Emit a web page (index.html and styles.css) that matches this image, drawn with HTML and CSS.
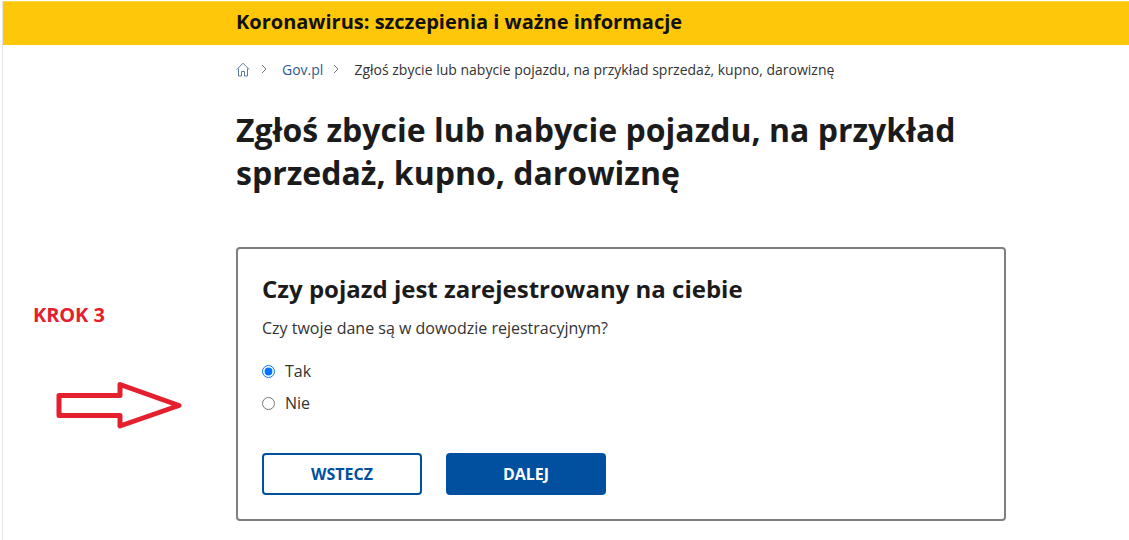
FILE: index.html
```html
<!DOCTYPE html>
<html lang="pl">
<head>
  <meta charset="UTF-8">
  <meta name="viewport" content="width=device-width, initial-scale=1">
  <title>Zgłoś zbycie lub nabycie pojazdu</title>
  <link rel="stylesheet" href="styles.css">
</head>
<body>
  <div class="page">
    <div class="alert-bar">
      <div class="alert-text">Koronawirus: szczepienia i ważne informacje</div>
    </div>

    <div class="layout">
      <aside class="side">
        <div class="step">KROK 3</div>
        <svg class="arrow" width="130" height="52" viewBox="0 0 130 52">
          <path d="M4 15.500H65V4.500L124 25.500L65 46V35.500H4Z" fill="none" stroke="#e5202e" stroke-width="5" stroke-linejoin="round"/>
        </svg>
      </aside>

      <main class="content">
        <nav class="crumbs">
          <svg class="home" width="14" height="15" viewBox="0 0 14 15">
            <path d="M0.800 7.500L7 1.200L13.200 7.500M2.500 6.500V14H5.500V9.500H8.500V14H11.500V6.500" fill="none" stroke="#5b7a99" stroke-width="1"/>
          </svg>
          <svg class="sep" width="6" height="10" viewBox="0 0 6 10"><path d="M1 1L5 5L1 9" fill="none" stroke="#6b7785" stroke-width="1"/></svg>
          <a href="#">Gov.pl</a>
          <svg class="sep" width="6" height="10" viewBox="0 0 6 10"><path d="M1 1L5 5L1 9" fill="none" stroke="#6b7785" stroke-width="1"/></svg>
          <span>Zgłoś zbycie lub nabycie pojazdu, na przykład sprzedaż, kupno, darowiznę</span>
        </nav>

        <h1>Zgłoś zbycie lub nabycie pojazdu, na przykład sprzedaż, kupno, darowiznę</h1>

        <form class="card">
          <h2>Czy pojazd jest zarejestrowany na ciebie</h2>
          <p>Czy twoje dane są w dowodzie rejestracyjnym?</p>
          <label class="choice"><input type="radio" name="owner" checked> Tak</label>
          <label class="choice"><input type="radio" name="owner"> Nie</label>
          <div class="buttons">
            <button type="button" class="btn btn-back">WSTECZ</button>
            <button type="button" class="btn btn-next">DALEJ</button>
          </div>
        </form>
      </main>
    </div>
  </div>
</body>
</html>
```

FILE: styles.css
```css
html, body {
  margin: 0;
  height: 540px;
  overflow: hidden;
  background: #fff;
}

body {
  font-family: "Open Sans", sans-serif;
  color: #1b1b1b;
}

.page {
  margin-left: 2px;
  border-left: 1px solid #e4e4e4;
  height: 540px;
}

.alert-bar {
  margin-top: 1px;
  height: 44px;
  background: #ffc709;
  border-top: 1px solid #ffd83f;
  box-sizing: border-box;
  padding: 0 0 4px 233px;
  display: flex;
  align-items: center;
}

.alert-text {
  font-size: 20px;
  font-weight: 700;
  color: #111;
}

.layout {
  display: flex;
}

.side {
  width: 233px;
  flex: none;
}

.step {
  margin: 256px 0 0 30px;
  font-size: 20px;
  font-weight: 700;
  line-height: 27px;
  letter-spacing: -0.1px;
  color: #e5202e;
}

.arrow {
  display: block;
  margin: 52px 0 0 52px;
}

.content {
  width: 770px;
}

.crumbs {
  display: flex;
  align-items: center;
  height: 20px;
  margin-top: 14px;
  font-size: 14px;
  color: #333;
}

.crumbs a {
  color: #2d5a8a;
  text-decoration: none;
  margin-right: 10px;
}

.home {
  margin-right: 11px;
}

.sep {
  margin-right: 15px;
}

h1 {
  margin: 29px 0 0;
  font-size: 32px;
  line-height: 43px;
  font-weight: 700;
  color: #1b1b1b;
}

.card {
  margin-top: 53px;
  height: 274px;
  box-sizing: border-box;
  border: 2px solid #7f7f7f;
  border-radius: 4px;
  padding: 24px;
}

h2 {
  margin: 0;
  font-size: 24px;
  line-height: 32px;
  font-weight: 700;
}

.card p {
  margin: 12px 0 16px;
  font-size: 16px;
  line-height: 22px;
  color: #333;
}

.choice {
  display: flex;
  align-items: center;
  gap: 10px;
  height: 32px;
  font-size: 16px;
  color: #333;
}

.choice input {
  width: 13px;
  height: 13px;
  margin: 0;
}

.buttons {
  display: flex;
  gap: 24px;
  margin-top: 34px;
}

.btn {
  width: 160px;
  height: 42px;
  box-sizing: border-box;
  border: 2px solid #00509f;
  border-radius: 4px;
  font-family: "Open Sans", sans-serif;
  font-size: 16px;
  font-weight: 700;
}

.btn-back {
  background: #fff;
  color: #00509f;
}

.btn-next {
  background: #00509f;
  color: #fff;
}
```
